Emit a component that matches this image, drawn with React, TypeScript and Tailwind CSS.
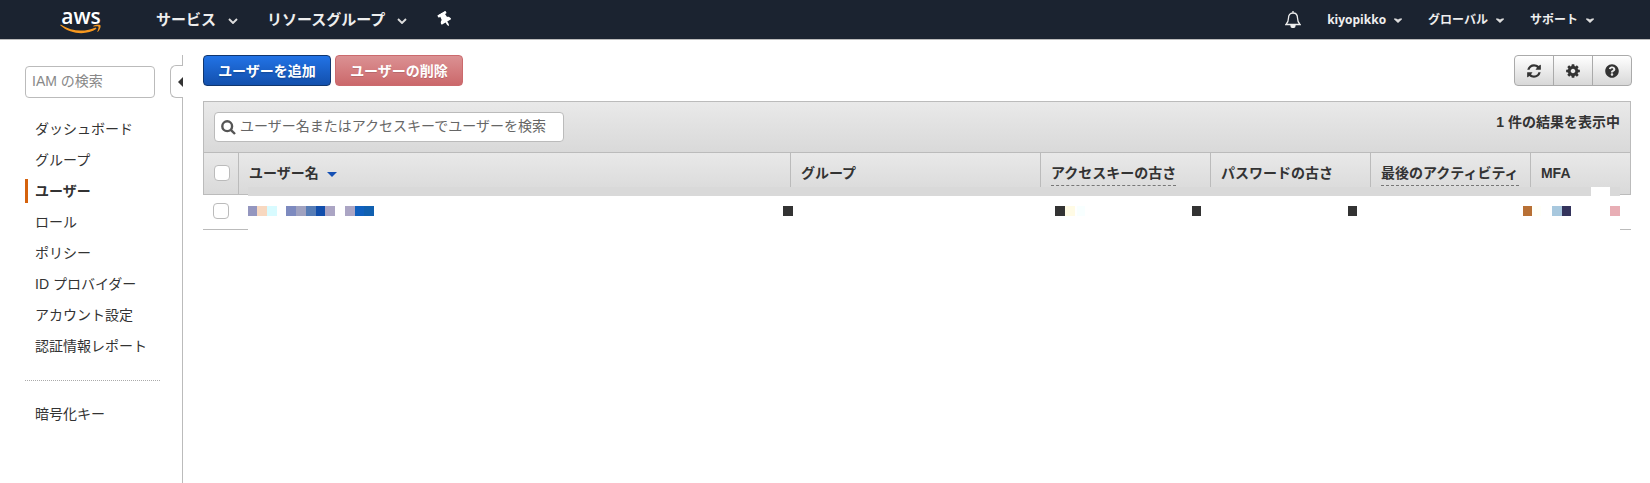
import React from "react";
import { FaQuestionCircle, FaThumbtack } from "react-icons/fa";

const REFRESH =
  "M1639 1056q0 5-1 7-64 268-268 434.5t-478 166.5q-146 0-282.5-55t-243.5-157l-129 129q-19 19-45 19t-45-19-19-45v-448q0-26 19-45t45-19h448q26 0 45 19t19 45-19 45l-137 137q71 66 161 102t187 36q134 0 250-65t186-179q11-17 53-117 8-23 30-23h192q13 0 22.5 9.5t9.5 22.5zm25-800v448q0 26-19 45t-45 19h-448q-26 0-45-19t-19-45 19-45l138-138q-148-137-349-137-134 0-250 65t-186 179q-11 17-53 117-8 23-30 23h-199q-13 0-22.5-9.5t-9.5-22.5v-7q65-268 270-434.5t480-166.5q146 0 284 55.5t245 156.5l130-129q19-19 45-19t45 19 19 45z";
const COG =
  "M1152 896q0-106-75-181t-181-75-181 75-75 181 75 181 181 75 181-75 75-181zm512-109v222q0 12-8 23t-20 13l-185 28q-19 54-39 91 35 50 107 138 10 12 10 25t-9 23q-27 37-99 108t-94 71q-12 0-26-9l-138-108q-44 23-91 38-16 136-29 186-7 28-36 28h-222q-14 0-24.5-8.5t-11.5-21.5l-28-184q-49-16-90-37l-141 107q-10 9-25 9-14 0-25-11-126-114-165-168-7-10-7-23 0-12 8-23 15-21 51-66.5t54-70.5q-27-50-41-99l-183-27q-13-2-21-12.5t-8-23.5v-222q0-12 8-23t19-13l186-28q14-46 39-92-40-57-107-138-10-12-10-24 0-10 9-23 26-36 98.5-107.5t94.5-71.5q13 0 26 10l138 107q44-23 91-38 16-136 29-186 7-28 36-28h222q14 0 24.5 8.5t11.5 21.5l28 184q49 16 90 37l142-107q9-9 24-9 13 0 25 10 129 119 165 170 7 8 7 22 0 12-8 23-15 21-51 66.5t-54 70.5q26 50 41 98l183 28q13 2 21 12.5t8 23.5z";

function Glyph({ d }: { d: string }) {
  return (
    <svg viewBox="0 0 1792 1792" className="size-4" fill="currentColor" aria-hidden="true">
      <path d={d} />
    </svg>
  );
}

function AwsLogo() {
  return (
    <div className="flex w-[42px] flex-col items-center pt-0.5 text-white">
      <span className="text-[21px] leading-[16px] font-semibold">aws</span>
      <svg viewBox="0 0 42 10" className="h-2.5 w-[42px]" aria-hidden="true">
        <path d="M0.500 1.500C11 10.800 27 11.300 36.500 4.800L35.600 3.400C26 8 12 8 1 0.800C0.400 0.500 0 1 0.500 1.500z" fill="#f7981f" />
        <path d="M33.500 1.800C35.500 0.600 39.500 0.400 40.400 1.200C41.200 2.400 39.800 6 38 7.800C37.600 8.200 37.200 8 37.400 7.500C38.200 5.500 38.900 3.200 38.500 2.700C38 2.100 35.500 2.300 33.900 2.500C33.200 2.500 33 2.100 33.500 1.800z" fill="#f7981f" />
      </svg>
    </div>
  );
}

function Chevron({ big = false }: { big?: boolean }) {
  return big ? (
    <svg viewBox="0 0 10 6" className="mt-1 h-1.5 w-2.5" fill="none" stroke="#ddd" strokeWidth="1.900" aria-hidden="true">
      <path d="M1 1l4 4 4-4" />
    </svg>
  ) : (
    <svg viewBox="0 0 8 5" className="mt-0.5 h-[5px] w-2" fill="#ddd" aria-hidden="true">
      <path d="M0 0.500h2l2 1 2-1h2v0.800L4 5 0 1.300z" />
    </svg>
  );
}

const NAV = ["ダッシュボード", "グループ", "ユーザー", "ロール", "ポリシー", "ID プロバイダー", "アカウント設定", "認証情報レポート"];

function Sidebar() {
  return (
    <div className="flex shrink-0">
      <nav className="w-[170px] pt-[26px] pl-[25px]" aria-label="IAM">
        <input
          type="search"
          aria-label="IAM の検索"
          placeholder="IAM の検索"
          className="block h-8 w-[130px] rounded border border-[#bbb] px-1.5 pb-0.5 text-sm placeholder:text-[#888]"
        />
        <ul className="mt-[15px] w-[135px] border-b border-dotted border-[#aaa] pb-[19px]">
          {NAV.map((item) => (
            <li key={item} className="flex h-[31px] items-center">
              <a
                href="#"
                className={
                  item === "ユーザー"
                    ? "border-l-[3px] border-[#d5620d] pl-[7px] leading-6 font-bold whitespace-nowrap"
                    : "pl-2.5 leading-6 whitespace-nowrap"
                }
              >
                {item}
              </a>
            </li>
          ))}
        </ul>
        <a href="#" className="mt-[21px] block pl-2.5 leading-6">
          暗号化キー
        </a>
      </nav>
      <div className="flex w-[13px] flex-col pt-[15px]">
        <div className="h-2.5 border-r border-[#bbb]" />
        <button
          type="button"
          aria-label="メニューを閉じる"
          className="flex h-[33px] items-center justify-end rounded-l-md border border-r-0 border-[#bbb]"
        >
          <svg viewBox="0 0 5 10" className="h-2.5 w-[5px]" fill="#333" aria-hidden="true">
            <path d="M5 0v10L0 5z" />
          </svg>
        </button>
        <div className="grow border-r border-[#bbb]" />
      </div>
    </div>
  );
}

type Block = { w: number; color?: string; grow?: boolean };

const MASK: Block[] = [
  { w: 9, color: "#9496bf" },
  { w: 10, color: "#f8d8c0" },
  { w: 10, color: "#d8fbff" },
  { w: 9 },
  { w: 10, color: "#7d8abf" },
  { w: 10, color: "#a0a2c0" },
  { w: 10, color: "#567cb6" },
  { w: 9, color: "#114eac" },
  { w: 10, color: "#aba5c4" },
  { w: 10 },
  { w: 10, color: "#aba5c4" },
  { w: 9, color: "#1060bf" },
  { w: 10, color: "#1060b0" },
  { w: 409, grow: true },
  { w: 10, color: "#333333" },
  { w: 262 },
  { w: 10, color: "#333333" },
  { w: 10, color: "#fffbe5" },
  { w: 2 },
  { w: 8, color: "#f8ffff" },
  { w: 107 },
  { w: 9, color: "#333333" },
  { w: 147 },
  { w: 9, color: "#333333" },
  { w: 166 },
  { w: 9, color: "#b87035" },
  { w: 9, color: "#fffff8" },
  { w: 11 },
  { w: 10, color: "#a8c8de" },
  { w: 9, color: "#33335c" },
  { w: 39 },
  { w: 10, color: "#e8aeb5" },
];

function MaskedRow() {
  return (
    <div className="flex h-2.5">
      {MASK.map((b, i) => (
        <span
          key={i}
          className={b.grow ? "grow" : "shrink-0"}
          style={b.grow ? undefined : { width: b.w, backgroundColor: b.color }}
        />
      ))}
    </div>
  );
}

const COLUMNS = [
  { label: "ユーザー名", sorted: true },
  { label: "グループ" },
  { label: "アクセスキーの古さ", hint: true },
  { label: "パスワードの古さ" },
  { label: "最後のアクティビティ", hint: true },
  { label: "MFA" },
];

const CHECK = "block size-4 appearance-none rounded border border-[#bbb] bg-white";

function UserTable() {
  return (
    <section className="mt-[15px]">
      <div className="flex h-[51px] items-start justify-between border border-b-0 border-[#bbb] bg-linear-to-b from-[#e9e9e9] to-[#d9d9d9] px-2.5">
        <label className="mt-2.5 flex h-[30px] w-[350px] items-center gap-1 rounded border border-[#bbb] bg-white pl-1.5">
          <svg viewBox="0 0 15 15" className="size-[15px] shrink-0" fill="none" stroke="#555" strokeWidth="2.400" aria-hidden="true">
            <circle cx="6.200" cy="6.200" r="4.900" />
            <path d="M9.800 9.800l4.200 4.200" />
          </svg>
          <input
            type="text"
            aria-label="ユーザーを検索"
            placeholder="ユーザー名またはアクセスキーでユーザーを検索"
            className="min-w-0 grow bg-transparent pb-0.5 text-sm outline-none placeholder:text-[#666]"
          />
        </label>
        <span className="mt-2 leading-6 font-bold">1 件の結果を表示中</span>
      </div>
      <div className="relative">
        <table className="w-full table-fixed border-separate border-spacing-0 text-left">
          <colgroup>
            <col className="w-[36px]" />
            <col />
            <col className="w-[250px]" />
            <col className="w-[170px]" />
            <col className="w-[160px]" />
            <col className="w-[160px]" />
            <col className="w-[100px]" />
          </colgroup>
          <thead>
            <tr className="h-[43px] bg-linear-to-b from-[#e9e9e9] to-[#d9d9d9]">
              <th className="border border-[#bbb] p-0 pb-0.5 pl-2.5">
                <input type="checkbox" aria-label="すべて選択" className={CHECK} />
              </th>
              {COLUMNS.map((c) => (
                <th key={c.label} className="border-y border-r border-[#bbb] p-0 pl-2.5 align-middle whitespace-nowrap">
                  <span
                    className={
                      c.hint
                        ? "inline-block border-b border-dashed border-[#777] leading-6"
                        : "inline-block border-b border-transparent leading-6"
                    }
                  >
                    {c.label}
                  </span>
                  {c.sorted && (
                    <svg viewBox="0 0 10 5" className="ml-2 inline-block h-[5px] w-2.5" fill="#1450b4" aria-hidden="true">
                      <path d="M0 0h10L5 5z" />
                    </svg>
                  )}
                </th>
              ))}
            </tr>
          </thead>
          <tbody>
            <tr className="h-[35px]">
              <td className="border-b border-[#bbb] p-0 pb-0.5 pl-2.5">
                <input type="checkbox" aria-label="ユーザーを選択" className={CHECK} />
              </td>
              <td colSpan={6} className="border-b border-[#bbb] p-0" />
            </tr>
          </tbody>
        </table>
        <div className="absolute top-[35px] right-[11px] left-[45px]">
          <div className="flex h-[9px] justify-end bg-[#d9d9d9] pr-2.5">
            <span className="w-[19px] bg-white" />
          </div>
          <div className="bg-white pt-2.5 pb-[14px]">
            <MaskedRow />
          </div>
        </div>
      </div>
    </section>
  );
}

const TOOL = "flex w-[39px] items-center justify-center border-r border-[#aaa] last:w-[38px] last:border-r-0";

export default function App() {
  return (
    <div className="flex min-h-screen flex-col bg-white font-['Liberation_Sans','Noto_Sans_CJK_JP',sans-serif] text-sm text-[#333]">
      <header className="flex h-10 items-center justify-between border-b border-[#bbb] bg-[#1b2330] pr-14 pl-[60px] font-['Open_Sans','Noto_Sans_CJK_JP',sans-serif] font-bold text-[#eee]">
        <div className="flex items-center text-[15px]">
          <AwsLogo />
          <a href="#" className="ml-[54px] flex items-center gap-3">
            サービス <Chevron big />
          </a>
          <a href="#" className="ml-[29px] flex items-center gap-3">
            リソースグループ <Chevron big />
          </a>
          <button type="button" aria-label="ピン留め" className="ml-8">
            <FaThumbtack className="h-[15px] w-3 -rotate-[30deg] text-white" />
          </button>
        </div>
        <div className="flex items-center text-xs">
          <button type="button" aria-label="通知" className="mr-[26px]">
            <svg viewBox="0 0 16 17" className="h-[17px] w-4" fill="none" stroke="#eee" strokeWidth="1.300" aria-hidden="true">
              <path d="M8 0v2M1 13.500C3 11.500 3.500 10 3.500 7C3.500 4 5 2 8 2s4.500 2 4.500 5c0 3 .5 4.500 2.500 6.500z" />
              <path d="M6 14.500a2 2 0 0 0 4 0z" fill="#eee" />
            </svg>
          </button>
          <a href="#" className="flex items-center gap-2">
            kiyopikko <Chevron />
          </a>
          <a href="#" className="ml-[26px] flex items-center gap-2">
            グローバル <Chevron />
          </a>
          <a href="#" className="ml-[26px] flex items-center gap-2">
            サポート <Chevron />
          </a>
        </div>
      </header>
      <div className="flex grow">
        <Sidebar />
        <main className="min-w-0 grow pt-[15px] pr-[19px] pl-5">
          <div className="flex h-[31px] justify-between">
            <div className="flex gap-1 font-bold text-white">
              <button type="button" className="w-32 rounded border border-[#11366e] bg-linear-to-b from-[#2273e6] to-[#1350ad] text-shadow-sm">
                ユーザーを追加
              </button>
              <button type="button" className="w-32 rounded border border-[#cb6a6d] bg-linear-to-b from-[#db9193] to-[#cb686b] text-shadow-2xs">
                ユーザーの削除
              </button>
            </div>
            <div className="-mr-px flex rounded border border-[#aaa] bg-linear-to-b from-white to-[#d8d8d8]">
              <button type="button" aria-label="更新" className={TOOL}>
                <Glyph d={REFRESH} />
              </button>
              <button type="button" aria-label="設定" className={TOOL}>
                <Glyph d={COG} />
              </button>
              <button type="button" aria-label="ヘルプ" className={TOOL}>
                <FaQuestionCircle className="size-3.5" />
              </button>
            </div>
          </div>
          <UserTable />
        </main>
      </div>
    </div>
  );
}
